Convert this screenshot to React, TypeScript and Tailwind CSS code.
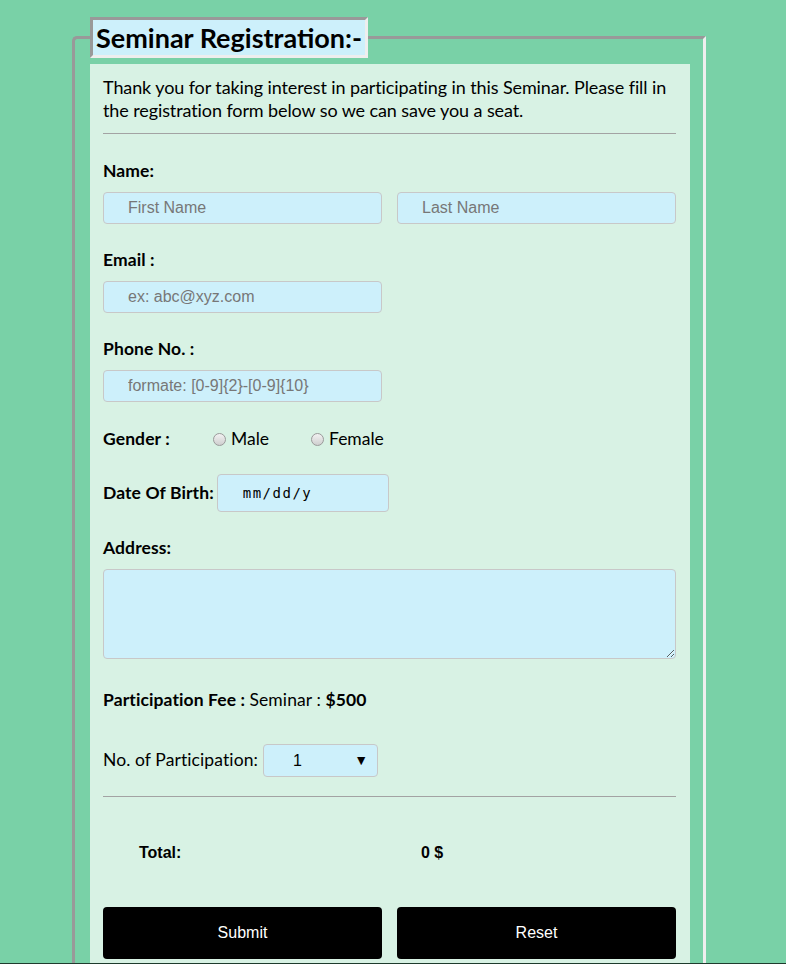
const body = "font-['Lato','Noto_Sans',sans-serif]";
const arial = "font-['Liberation_Sans','Arial',sans-serif]";

function TextField({ placeholder }: { placeholder: string }) {
    return (
        <input
            type="text"
            placeholder={placeholder}
            className={`${arial} block w-full h-[32px] pl-[24px] pr-2 text-[16px] bg-[#cdf0fb] border border-[#c8c8c8] rounded-[4px] placeholder:text-[#777] outline-none`}
        />
    );
}

function Radio({ label }: { label: string }) {
    return (
        <label className="flex items-center gap-[5px]">
            <span className="w-[13px] h-[13px] rounded-full border border-[#9a9a9a] bg-linear-to-b from-[#f2f2f2] to-[#cfcfcf]" />
            <span className="text-[17.5px]">{label}</span>
        </label>
    );
}

export default function App() {
    return (
        <div className={`${body} h-[964px] overflow-hidden bg-[#79d1a7] border-b border-[#1e3b2d] text-black`}>
            <fieldset className="ml-[72px] mt-[17px] w-[634px] border-[3px] border-t-[#999] border-l-[#999] border-r-[#eee] border-b-[#eee] rounded-tl-[5px] pt-[6px] pl-[15px] pr-[13px] pb-0">
                <legend className="px-[3px] bg-[#cdf0fb] border-[3px] border-t-[#999] border-l-[#999] border-r-[#eee] border-b-[#eee] text-[27px] leading-[35px] font-bold">
                    Seminar Registration:-
                </legend>

                <div className="bg-[#d8f2e4] pl-[13px] pr-[14px] pt-[12px] pb-[40px]">
                    {/* Intro */}
                    <p className="text-[18px] leading-[23px] tracking-[-0.1px]">
                        Thank you for taking interest in participating in this Seminar. Please fill in the registration form below so we can save you a seat.
                    </p>
                    <hr className="mt-[11px] border-t border-[#a3a3a3]" />

                    {/* Name */}
                    <div className="mt-[26px] text-[17.5px] leading-[22px] font-bold tracking-[0.1px]">Name:</div>
                    <div className="mt-[10px] flex gap-[15px]">
                        <TextField placeholder="First Name" />
                        <TextField placeholder="Last Name" />
                    </div>

                    {/* Email */}
                    <div className="mt-[25px] text-[17.5px] leading-[22px] font-bold tracking-[0.1px]">Email :</div>
                    <div className="mt-[10px] w-[279px]">
                        <TextField placeholder="ex: abc@xyz.com" />
                    </div>

                    {/* Phone */}
                    <div className="mt-[25px] text-[17.5px] leading-[22px] font-bold tracking-[0.1px]">Phone No. :</div>
                    <div className="mt-[10px] w-[279px]">
                        <TextField placeholder="formate: [0-9]{2}-[0-9]{10}" />
                    </div>

                    {/* Gender */}
                    <div className="mt-[26px] flex items-center leading-[22px]">
                        <span className="w-[110px] text-[17.5px] font-bold tracking-[0.1px]">Gender :</span>
                        <div className="w-[98px]"><Radio label="Male" /></div>
                        <Radio label="Female" />
                    </div>

                    {/* DOB */}
                    <div className="mt-[24px] flex items-center gap-[3px]">
                        <span className="text-[17.5px] font-bold tracking-[0.1px]">Date Of Birth:</span>
                        <input
                            type="text"
                            placeholder="mm/dd/y"
                            className="w-[172px] h-[38px] pl-[25px] bg-[#cdf0fb] border border-[#c8c8c8] rounded-[4px] font-['DejaVu_Sans_Mono',monospace] text-[14px] tracking-[1.5px] placeholder:text-black outline-none"
                        />
                    </div>

                    {/* Address */}
                    <div className="mt-[25px] text-[17.5px] leading-[22px] font-bold tracking-[0.1px]">Address:</div>
                    <textarea className="mt-[10px] block w-full h-[90px] bg-[#cdf0fb] border border-[#c8c8c8] rounded-[4px] outline-none" />

                    {/* Fee */}
                    <div className="mt-[30px] text-[17.5px] leading-[22px] tracking-[0.1px]">
                        <span className="font-bold">Participation Fee : </span>
                        Seminar : <span className="font-bold">$500</span>
                    </div>

                    {/* Participation count */}
                    <div className="mt-[33px] flex items-center gap-[5px]">
                        <span className="text-[17.5px] tracking-[0.1px]">No. of Participation:</span>
                        <div className={`${arial} w-[115px] h-[33px] flex items-center justify-between pl-[29px] pr-[9px] bg-[#cdf0fb] border border-[#c8c8c8] rounded-[4px] text-[16px]`}>
                            <span>1</span>
                            <span className="text-[14px]">▼</span>
                        </div>
                    </div>

                    <hr className="mt-[19px] border-t border-[#a3a3a3]" />

                    {/* Total */}
                    <div className={`${arial} mt-[45px] flex pl-[36px] text-[16px] leading-[22px] font-bold`}>
                        <span className="w-[282px]">Total:</span>
                        <span>0 $</span>
                    </div>

                    {/* Buttons */}
                    <div className={`${arial} mt-[43px] flex gap-[15px]`}>
                        <button className="flex-1 h-[52px] bg-black text-white text-[16px] rounded-[4px]">Submit</button>
                        <button className="flex-1 h-[52px] bg-black text-white text-[16px] rounded-[4px]">Reset</button>
                    </div>
                </div>
            </fieldset>
        </div>
    );
}
